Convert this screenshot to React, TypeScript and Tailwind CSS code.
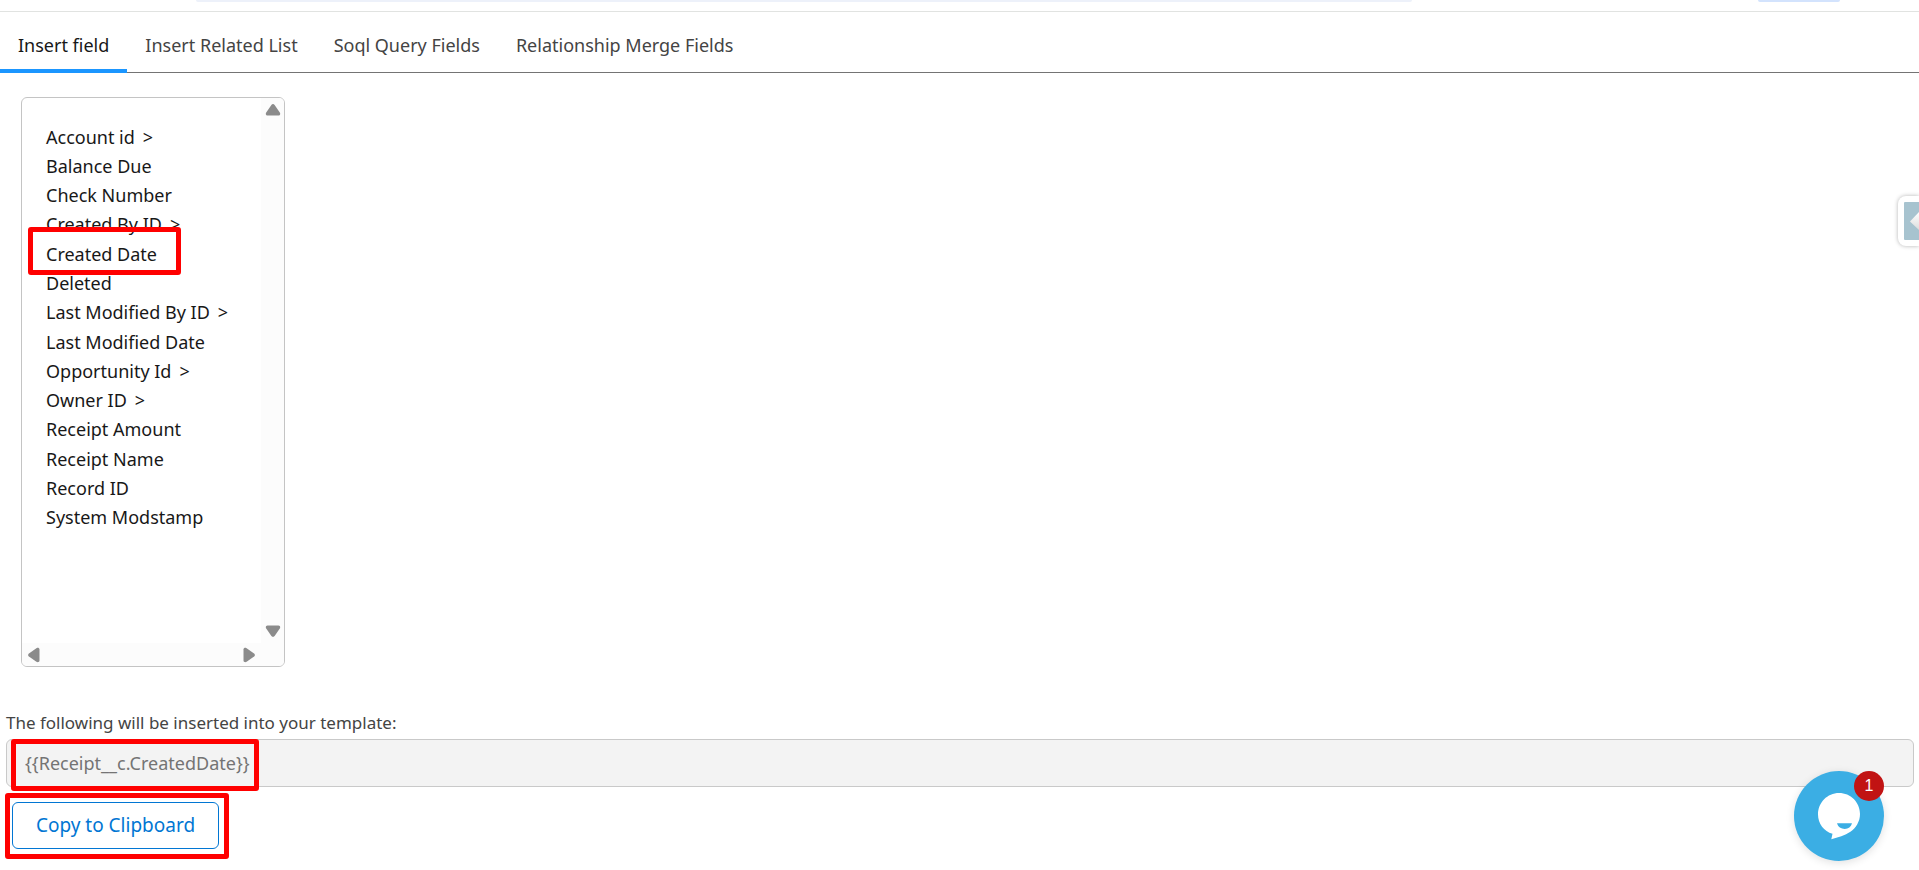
const tabs = ["Insert field", "Insert Related List", "Soql Query Fields", "Relationship Merge Fields"];

const fields = [
  { name: "Account id", expands: true },
  { name: "Balance Due", expands: false },
  { name: "Check Number", expands: false },
  { name: "Created By ID", expands: true },
  { name: "Created Date", expands: false },
  { name: "Deleted", expands: false },
  { name: "Last Modified By ID", expands: true },
  { name: "Last Modified Date", expands: false },
  { name: "Opportunity Id", expands: true },
  { name: "Owner ID", expands: true },
  { name: "Receipt Amount", expands: false },
  { name: "Receipt Name", expands: false },
  { name: "Record ID", expands: false },
  { name: "System Modstamp", expands: false },
];

function Callout({ className }: { className: string }) {
  return (
    <span
      aria-hidden="true"
      className={`pointer-events-none absolute rounded-[3px] border-5 border-[#ff0000] ${className}`}
    />
  );
}

function ScrollArrow({ label, className }: { label: string; className: string }) {
  return (
    <button type="button" aria-label={label} className="block">
      <svg viewBox="0 0 16 12" className={`h-3 w-4 ${className}`} fill="#8b8b8b">
        <path d="M6.4.9a2 2 0 0 1 3.2 0l5.2 7.5c.9 1.4.2 3.1-1.3 3.1H2.5C1 11.5.3 9.800 1.200 8.400z" />
      </svg>
    </button>
  );
}

function BrowserEdge() {
  return (
    <div className="flex h-3 border-b border-[#e1e3e1]">
      <div className="ml-[196px] mr-[346px] h-[2px] flex-1 rounded-b-xl bg-[#edf1fa]" />
      <div className="mr-[79px] h-[2px] w-[82px] rounded-b-xl bg-[#d3e3fd]" />
    </div>
  );
}

function FieldList() {
  return (
    <section
      aria-label="Fields"
      className="ml-[21px] mt-6 grid h-[570px] w-[264px] grid-cols-[1fr_23px] grid-rows-[1fr_23px] overflow-hidden rounded-md border border-[#c4c4c4]"
    >
      <ul className="mt-6 grid h-[410px] auto-rows-fr pl-6 text-lg text-[#181818]">
        {fields.map(({ name, expands }) => (
          <li key={name} className="relative flex items-center whitespace-nowrap">
            <button type="button" className="flex gap-2">
              {name}
              {expands && <span>&gt;</span>}
            </button>
            {name === "Created Date" && <Callout className="-left-[18px] -top-3 h-12 w-[153px]" />}
          </li>
        ))}
      </ul>
      <div className="flex flex-col items-center justify-between bg-[#fcfcfc] pb-[6px] pt-[6px]">
        <ScrollArrow label="Scroll up" className="" />
        <ScrollArrow label="Scroll down" className="rotate-180" />
      </div>
      <div className="flex items-center justify-between bg-[#fcfcfc] px-1">
        <ScrollArrow label="Scroll left" className="-rotate-90" />
        <ScrollArrow label="Scroll right" className="rotate-90" />
      </div>
      <div className="bg-[#fcfcfc]" />
    </section>
  );
}

function SideHandle() {
  return (
    <button
      type="button"
      aria-label="Open panel"
      className="fixed right-0 top-[196px] rounded-l-lg bg-white py-[6px] pl-[6px] shadow-[0_0_4px_rgba(0,0,0,0.3)]"
    >
      <svg viewBox="0 0 15 38" className="h-[38px] w-[15px]">
        <defs>
          <linearGradient id="handle" x1="0" y1="0" x2="0" y2="1">
            <stop offset="0" stopColor="#ffffff" />
            <stop offset="1" stopColor="#dcdcdc" />
          </linearGradient>
        </defs>
        <path d="M1 0h14v38H1a1 1 0 0 1-1-1V1a1 1 0 0 1 1-1z" fill="#a7c3cf" />
        <path d="M15 10v18L6 19.500z" fill="url(#handle)" />
      </svg>
    </button>
  );
}

function ChatBubble() {
  return (
    <button
      type="button"
      aria-label="Open chat, 1 new message"
      className="fixed right-[35px] top-[771px] h-[90px] w-[90px] rounded-full bg-[#3baee4] shadow-[0_2px_8px_rgba(0,0,0,0.12)]"
    >
      <svg viewBox="0 0 90 90" className="h-[90px] w-[90px]">
        <path
          d="M45 22c11.600 0 21 9.200 21 21 0 7.500-4 13.800-9.600 17.800C51 64.500 44 66.500 37.300 68.300l1.200-5.500C30 60.500 24 52.500 24 43.500 24 31.500 33.400 22 45 22z"
          fill="#fff"
        />
        <path d="M43 52.300h15c-1 3.800-3.700 5.600-7.200 5.600-3.700 0-6.800-1.900-7.800-5.600z" fill="#3baee4" />
      </svg>
      <span className="absolute right-0 top-0 flex h-[30px] w-[30px] items-center justify-center rounded-full bg-[#c11313] font-['Liberation_Sans',sans-serif] text-base text-white">
        1
      </span>
    </button>
  );
}

export default function App() {
  return (
    <div className="bg-white pb-4 font-['Noto_Sans','Open_Sans',sans-serif] text-[#444444]">
      <BrowserEdge />
      <nav role="tablist" className="flex h-[61px] border-b border-[#747474] text-lg">
        {tabs.map((tab, i) => (
          <button
            key={tab}
            type="button"
            role="tab"
            aria-selected={i === 0}
            className={
              i === 0
                ? "-mb-px border-b-4 border-[#1b96ff] px-[18px] pt-2 text-[#181818]"
                : "-mb-px border-b-4 border-transparent px-[18px] pt-2"
            }
          >
            {tab}
          </button>
        ))}
      </nav>
      <main>
        <FieldList />
        <form className="mt-10 pl-[6px] pr-[5px]" onSubmit={(e) => e.preventDefault()}>
          <label htmlFor="merge" className="block text-[17px] leading-8">
            The following will be inserted into your template:
          </label>
          <div className="relative">
            <input
              id="merge"
              readOnly
              value="{{Receipt__c.CreatedDate}}"
              className="block h-12 w-full rounded-md border border-[#c9c9c9] bg-[#f3f3f3] px-[18px] text-lg text-[#747474]"
            />
            <Callout className="left-[5px] top-0 h-[52px] w-[248px]" />
          </div>
          <div className="relative ml-[6px] mt-[15px] w-[207px]">
            <button
              type="button"
              className="block h-[47px] w-full rounded-md border border-[#0176d3] bg-white text-[19px] text-[#0176d3]"
            >
              Copy to Clipboard
            </button>
            <Callout className="-left-[7px] -top-[9px] h-[66px] w-[224px]" />
          </div>
        </form>
      </main>
      <SideHandle />
      <ChatBubble />
    </div>
  );
}
